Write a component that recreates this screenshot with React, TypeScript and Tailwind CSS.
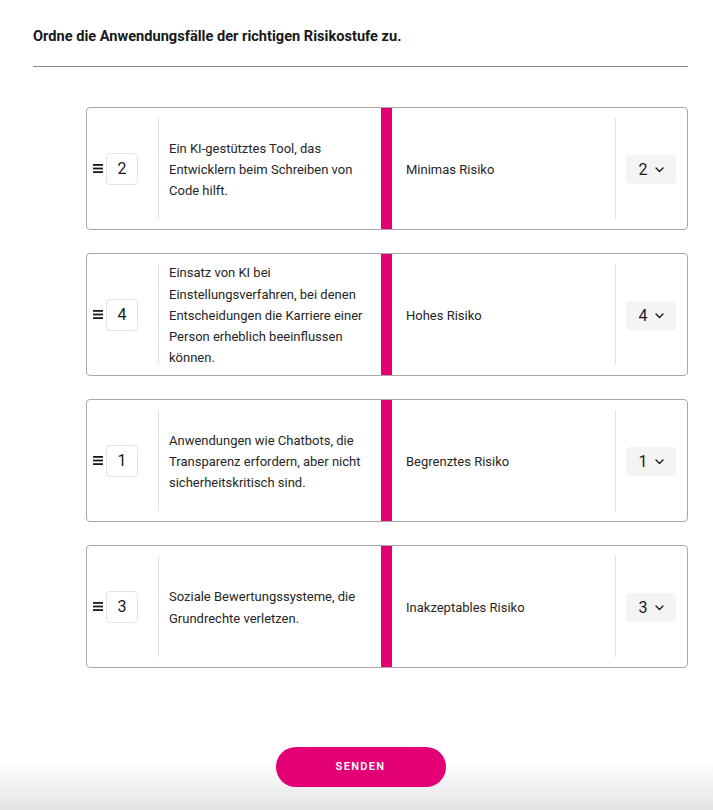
import { useState } from "react";

type Row = { id: number; lines: string[]; risk: string; value: number };

const ROWS: Row[] = [
  { id: 2, lines: ["Ein KI-gestütztes Tool, das", "Entwicklern beim Schreiben von", "Code hilft."], risk: "Minimas Risiko", value: 2 },
  {
    id: 4,
    lines: [
      "Einsatz von KI bei",
      "Einstellungsverfahren, bei denen",
      "Entscheidungen die Karriere einer",
      "Person erheblich beeinflussen",
      "können.",
    ],
    risk: "Hohes Risiko",
    value: 4,
  },
  { id: 1, lines: ["Anwendungen wie Chatbots, die", "Transparenz erfordern, aber nicht", "sicherheitskritisch sind."], risk: "Begrenztes Risiko", value: 1 },
  { id: 3, lines: ["Soziale Bewertungssysteme, die", "Grundrechte verletzen."], risk: "Inakzeptables Risiko", value: 3 },
];

function DragHandle() {
  return (
    <svg width="10" height="9" viewBox="0 0 10 9" className="shrink-0">
      <rect x="0" y="0" width="10" height="1.8" fill="#1a1a1a" />
      <rect x="0" y="3.6" width="10" height="1.8" fill="#1a1a1a" />
      <rect x="0" y="7.2" width="10" height="1.8" fill="#1a1a1a" />
    </svg>
  );
}

function Chevron() {
  return (
    <svg width="9" height="6" viewBox="0 0 9 6" fill="none">
      <path d="M1 1l3.5 3.5L8 1" stroke="#1a1a1a" strokeWidth="1.4" strokeLinecap="round" strokeLinejoin="round" />
    </svg>
  );
}

/* --- one matching row ------------------------------------------------- */
function MatchCard({ row }: { row: Row }) {
  return (
    <div className="flex h-[123px] items-stretch rounded-[4px] border border-[#a8a8a8] bg-white">
      {/* handle + position */}
      <div className="flex w-[71px] shrink-0 items-center gap-[3px] pl-[6px]">
        <DragHandle />
        <div className="flex h-[32px] w-[32px] items-center justify-center rounded-[4px] border border-[#e3e3e3] text-[16px] text-[#1a1a1a]">
          {row.id}
        </div>
      </div>
      <div className="my-[10px] w-px shrink-0 bg-[#e3e3e3]" />

      {/* use case */}
      <div className="flex w-[222px] shrink-0 flex-col justify-center pl-[10px] pt-[2px] text-[13px] leading-[21.3px] text-[#262626]">
        {row.lines.map((l) => (
          <span key={l} className="block whitespace-nowrap">{l}</span>
        ))}
      </div>

      {/* magenta connector */}
      <div className="w-[11px] shrink-0 bg-[#e20074]" />

      {/* risk level */}
      <div className="flex flex-1 items-center pl-[14px] pt-[2px] text-[13px] text-[#262626]">{row.risk}</div>
      <div className="my-[10px] w-px shrink-0 bg-[#e3e3e3]" />
      <div className="flex w-[71px] shrink-0 items-center pl-[10px] pt-[2px]">
        <button className="flex h-[29px] w-[50px] items-center justify-center gap-[7px] rounded-[4px] bg-[#f4f4f4] text-[16px] text-[#1a1a1a]">
          {row.value}
          <Chevron />
        </button>
      </div>
    </div>
  );
}

export default function App() {
  const [rows] = useState<Row[]>(ROWS);

  return (
    <div className="flex min-h-[810px] flex-col bg-white font-['Roboto',sans-serif]">
      <div className="pl-[33px] pr-[25px]">
        <h1 className="pt-[26px] text-[14.6px] font-bold leading-[20px] text-[#191919]">
          Ordne die Anwendungsfälle der richtigen Risikostufe zu.
        </h1>
        <div className="mt-[20px] h-px bg-[#8c8c8c]" />

        <div className="ml-[53px] mt-[40px] flex flex-col gap-[23px]">
          {rows.map((r) => (
            <MatchCard key={r.id} row={r} />
          ))}
        </div>
      </div>

      {/* footer with send button */}
      <div className="mt-auto flex h-[110px] justify-center bg-[linear-gradient(to_bottom,#ffffff_55%,#e4e4e4)] pl-[33px] pr-[25px] pt-[47px]">
        <button className="h-[40px] w-[170px] rounded-full bg-[#e20074] text-[11px] font-semibold tracking-[0.12em] text-white">
          SENDEN
        </button>
      </div>
    </div>
  );
}
